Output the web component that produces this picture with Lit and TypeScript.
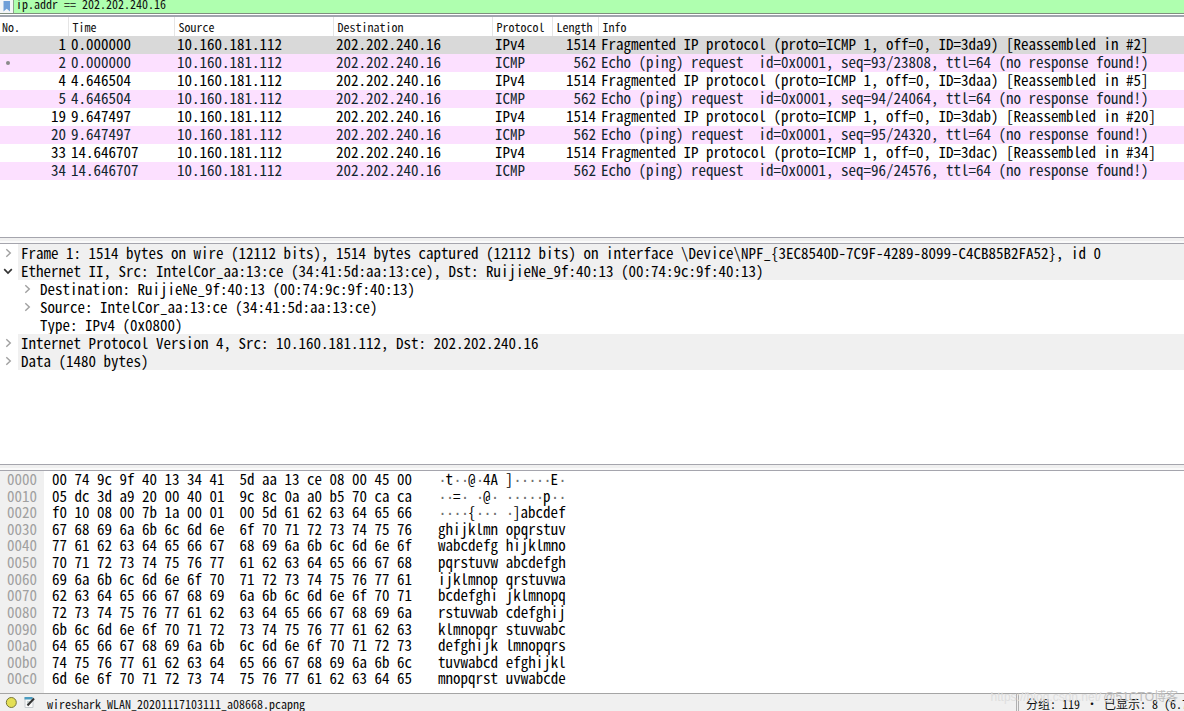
import { LitElement, html, css, svg } from "lit";
import { customElement, property, state } from "lit/decorators.js";
import { classMap } from "lit/directives/class-map.js";

const MONO = css`"Noto Sans Mono CJK SC", "Noto Sans CJK SC", monospace`;

type Packet = [number, string, string, number, string];

const SRC = "10.160.181.112";
const DST = "202.202.240.16";

const frag = (id: string, n: number) =>
  `Fragmented IP protocol (proto=ICMP 1, off=0, ID=${id}) [Reassembled in #${n}]`;
const echo = (seq: string) =>
  `Echo (ping) request  id=0x0001, seq=${seq}, ttl=64 (no response found!)`;

const PACKETS: Packet[] = [
  [1, "0.000000", "IPv4", 1514, frag("3da9", 2)],
  [2, "0.000000", "ICMP", 562, echo("93/23808")],
  [4, "4.646504", "IPv4", 1514, frag("3daa", 5)],
  [5, "4.646504", "ICMP", 562, echo("94/24064")],
  [19, "9.647497", "IPv4", 1514, frag("3dab", 20)],
  [20, "9.647497", "ICMP", 562, echo("95/24320")],
  [33, "14.646707", "IPv4", 1514, frag("3dac", 34)],
  [34, "14.646707", "ICMP", 562, echo("96/24576")],
];

@customElement("packet-list")
export class PacketList extends LitElement {
  @state() private selected = 1;

  static styles = css`
    :host { display: block; overflow: hidden; background: #fff; }
    table { width: 100%; border-collapse: collapse; table-layout: fixed; }
    .no { width: 68px; }
    .time { width: 106px; }
    .addr { width: 159px; }
    .proto { width: 60px; }
    .len { width: 46px; }
    th {
      height: 19px; padding: 0 0 0 4px; text-align: left; white-space: pre;
      font: 12px/18px ${MONO}; color: #111;
      border-left: 1px solid #e5e5e5; box-sizing: border-box;
    }
    th:first-child { padding-left: 2px; border-left: 0; }
    td {
      padding: 0 0 2px 3px; white-space: pre;
      font: 15px/16px ${MONO};
    }
    td.num { text-align: right; padding: 0 2px 2px 0; }
    td.first { position: relative; }
    tr { color: #000; }
    tr.icmp { color: #12272e; background: #fce0ff; }
    tr.selected { color: #000; background: #d9d9d9; }
    .related {
      position: absolute; left: 6px; top: 7px; width: 4px; height: 4px;
      border-radius: 2px; background: #8a8a8a;
    }
  `;

  render() {
    return html`<table>
      <colgroup>
        <col class="no"><col class="time"><col class="addr"><col class="addr">
        <col class="proto"><col class="len"><col>
      </colgroup>
      <thead>
        <tr>${["No.", "Time", "Source", "Destination", "Protocol", "Length", "Info"].map(
          (h) => html`<th scope="col">${h}</th>`)}</tr>
      </thead>
      <tbody>
        ${PACKETS.map(([no, time, proto, len, info]) => html`<tr
          class=${classMap({ icmp: proto === "ICMP", selected: no === this.selected })}
          @click=${() => (this.selected = no)}>
          <td class="num first">${no === 2 ? html`<span class="related"></span>` : null}${no}</td>
          <td>${time}</td><td>${SRC}</td><td>${DST}</td><td>${proto}</td>
          <td class="num">${len}</td><td>${info}</td>
        </tr>`)}
      </tbody>
    </table>`;
  }
}

interface TreeLine { text: string; level: number; open?: boolean; leaf?: boolean; }

const TREE: TreeLine[] = [
  { level: 0, text: "Frame 1: 1514 bytes on wire (12112 bits), 1514 bytes captured (12112 bits) on interface \\Device\\NPF_{3EC8540D-7C9F-4289-8099-C4CB85B2FA52}, id 0" },
  { level: 0, open: true, text: "Ethernet II, Src: IntelCor_aa:13:ce (34:41:5d:aa:13:ce), Dst: RuijieNe_9f:40:13 (00:74:9c:9f:40:13)" },
  { level: 1, text: "Destination: RuijieNe_9f:40:13 (00:74:9c:9f:40:13)" },
  { level: 1, text: "Source: IntelCor_aa:13:ce (34:41:5d:aa:13:ce)" },
  { level: 1, leaf: true, text: "Type: IPv4 (0x0800)" },
  { level: 0, text: "Internet Protocol Version 4, Src: 10.160.181.112, Dst: 202.202.240.16" },
  { level: 0, text: "Data (1480 bytes)" },
];

@customElement("packet-details")
export class PacketDetails extends LitElement {
  static styles = css`
    :host { display: block; overflow: hidden; background: #fff; font: 15px/18px ${MONO}; color: #000; }
    ul { list-style: none; margin: 0; padding: 0; }
    li { display: flex; height: 18px; }
    .nested { padding-left: 19px; }
    button, .blank {
      flex: none; width: 18px; height: 18px; padding: 0; border: 0; background: none;
      display: flex; align-items: center; justify-content: center;
    }
    svg { display: block; width: 18px; height: 18px; fill: none; stroke: #a0a0a0; stroke-width: 1.4; }
    .open svg { stroke: #333; stroke-width: 1.7; }
    .text { flex: 1; padding-left: 3px; white-space: pre; }
    .top .text { background: #f0f0f0; }
  `;

  render() {
    return html`<ul>${TREE.map((l) => html`<li
      class=${classMap({ top: l.level === 0, nested: l.level === 1, open: !!l.open })}>
      ${l.leaf ? html`<span class="blank"></span>` : html`<button
        aria-label=${l.open ? "Collapse" : "Expand"} aria-expanded=${l.open ? "true" : "false"}>
        <svg viewBox="0 0 18 18">${l.open
          ? svg`<path d="M4.200 7.200 8 11l3.800-3.800"/>`
          : svg`<path d="M6.300 5.200 10.300 9l-4 3.800"/>`}</svg></button>`}
      <span class="text">${l.text}</span></li>`)}</ul>`;
  }
}

const HEAD = [
  "00 74 9c 9f 40 13 34 41  5d aa 13 ce 08 00 45 00",
  "05 dc 3d a9 20 00 40 01  9c 8c 0a a0 b5 70 ca ca",
  "f0 10 08 00 7b 1a 00 01  00 5d",
];

const frameBytes = (): number[] => {
  const out = HEAD.join(" ").split(/\s+/).map((b) => parseInt(b, 16));
  // The ping payload repeats the letters a to w.
  for (let i = 0; out.length < 13 * 16; i++) out.push(0x61 + (i % 23));
  return out;
};

@customElement("packet-bytes")
export class PacketBytes extends LitElement {
  static styles = css`
    :host { display: flex; overflow: hidden; background: #fff; font: 15px/16px ${MONO}; color: #000; }
    .col {
      display: grid; grid-auto-rows: minmax(0, 1fr); align-items: start;
      padding-bottom: 6px; white-space: pre;
    }
    .col > span { height: 16px; line-height: 15px; }
    .offset { width: 37px; padding-left: 7px; background: #f0f0f0; color: #a0a0a0; }
    .hex { width: 386px; padding-left: 8px; }
    .dot {
      display: inline-block; width: 0.5em; line-height: 0; color: #707070;
      font-family: "Liberation Mono", monospace;
    }
  `;

  private glyph(b: number) {
    return b > 0x1f && b < 0x7f ? String.fromCharCode(b) : html`<span class="dot">·</span>`;
  }

  render() {
    const data = frameBytes();
    const rows = Array.from({ length: 13 }, (_, r) => data.slice(r * 16, r * 16 + 16));
    const hex = (a: number[]) => a.map((b) => b.toString(16).padStart(2, "0")).join(" ");
    return html`
      <div class="col offset">${rows.map((_, r) => html`<span>${(r * 16).toString(16).padStart(4, "0")}</span>`)}</div>
      <div class="col hex">${rows.map((r) => html`<span>${hex(r.slice(0, 8))}  ${hex(r.slice(8))}</span>`)}</div>
      <div class="col">${rows.map((r) => html`<span>${r.slice(0, 8).map(this.glyph)} ${r.slice(8).map(this.glyph)}</span>`)}</div>`;
  }
}

@customElement("app-root")
export class AppRoot extends LitElement {
  @property() filter = "ip.addr == 202.202.240.16";

  static styles = css`
    :host {
      display: flex; flex-direction: column; height: 100vh; overflow: hidden;
      position: relative; background: #f0f0f0; font: 12px/16px ${MONO}; color: #111;
    }
    .filter {
      flex: none; display: flex; align-items: flex-end; height: 13px; background: #afffaf;
      border-bottom: 1px solid #7f8f7f;
    }
    .mark {
      flex: none; display: flex; width: 14px; height: 13px; padding: 0; border: 0;
      border-right: 1px solid #8fa58f; background: #f4f6f8;
    }
    .mark svg { display: block; width: 13px; height: 13px; }
    input {
      flex: 1; min-width: 0; height: 18px; border: 0; padding: 0 0 2px 2px; outline: 0;
      box-sizing: border-box; background: transparent; font: inherit; color: #111;
    }
    .gap { flex: none; height: 1px; background: #fff; border-bottom: 2px solid #a0a5ae; }
    .pane { flex: 1 1 0px; min-height: 0; }
    .bytes { flex-basis: 2px; }
    .split {
      flex: none; height: 5px; background: linear-gradient(#f0f0f0 60%, #fafafa 60%);
      border-top: 1px solid #a5a5ad; border-bottom: 1px solid #a5a5ad;
    }
    footer {
      flex: none; display: flex; align-items: center; height: 17px;
      border-top: 1px solid #a5a5a5; background: #f0f0f0;
    }
    .icon { flex: none; display: flex; width: 18px; height: 17px; padding: 0; border: 0; background: none; }
    .icon svg { display: block; width: 18px; height: 17px; }
    .file { flex: 1; padding: 3px 0 0 11px; }
    .counts {
      flex: none; width: 158px; padding: 3px 0 0 7px; white-space: nowrap;
      border-left: 3px double #b0b0b0;
    }
    .watermark {
      position: absolute; right: 6px; bottom: 5px; display: flex; gap: 2px; pointer-events: none;
      font: 12px/18px "Liberation Sans", "Noto Sans CJK SC", sans-serif;
    }
    .site { color: #dedede; }
    .tag { color: #bdbdbd; }
  `;

  render() {
    return html`
      <div class="filter">
        <button class="mark" aria-label="Bookmarks">
          <svg viewBox="0 0 13 13"><path d="M3.500 1h6.500v10.500L6.700 8.700 3.500 11.500z" fill="#6f9fd8"/></svg>
        </button>
        <input aria-label="Display filter" spellcheck="false" .value=${this.filter}>
      </div>
      <div class="gap"></div>
      <packet-list class="pane"></packet-list>
      <div class="split"></div>
      <packet-details class="pane"></packet-details>
      <div class="split"></div>
      <packet-bytes class="pane bytes"></packet-bytes>
      <footer>
        <button class="icon" aria-label="Expert information">
          <svg viewBox="0 0 18 17"><circle cx="11.300" cy="8.500" r="5" fill="#e4df55" stroke="#77773a"/></svg>
        </button>
        <button class="icon" aria-label="Capture file comment">
          <svg viewBox="0 0 18 17"><path d="M7 3.500h8v10H7z" fill="#fafafa" stroke="#c8ccd0"/>
            <path d="M6.500 3h8v2.500h-8z" fill="#4a9cc0"/>
            <path d="M9 8h3M9 10h2" stroke="#9aa"/>
            <path d="m9.500 11.500 6.500-7" stroke="#333" stroke-width="2"/></svg>
        </button>
        <span class="file">wireshark_WLAN_20201117103111_a08668.pcapng</span>
        <span class="counts">分组: 119 · 已显示: 8 (6.7%)</span>
      </footer>
      <div class="watermark"><span class="site">https://blog.csdn.net/</span><span class="tag">@51CTO博客</span></div>`;
  }
}
